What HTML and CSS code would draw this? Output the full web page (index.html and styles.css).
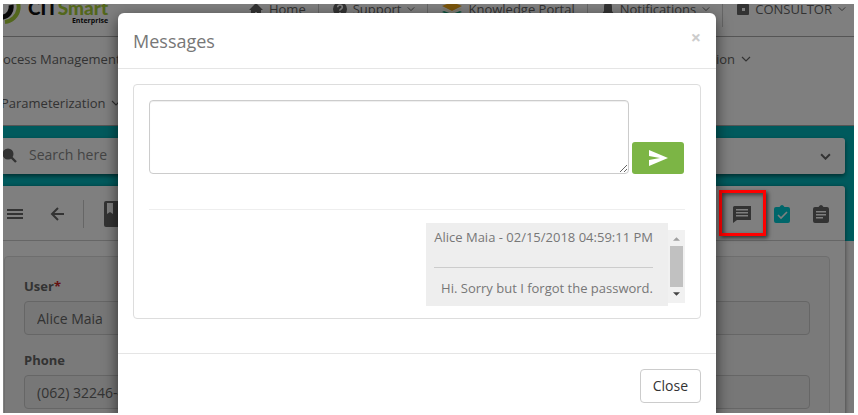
FILE: index.html
```html
<!DOCTYPE html>
<html lang="en">
<head>
<meta charset="utf-8">
<title>CITSmart Enterprise - Messages</title>
<link rel="stylesheet" href="styles.css">
</head>
<body>
<div class="app">
  <div class="page">
    <header class="topbar">
      <a class="brand" href="#">
        <svg class="brand-mark" viewBox="0 0 36 36" width="36" height="36"><path d="M25 4.500a15 15 0 0 1-5 28.500" fill="none" stroke="#a6ce39" stroke-width="4"/><path d="M26 16a9 10 0 1 1-8-8" fill="none" stroke="#111" stroke-width="5"/></svg>
        <span class="brand-text"><span class="brand-name">CIT<span class="green">Smart</span></span><span class="brand-sub">Enterprise</span></span>
      </a>
      <nav class="links">
        <a href="#"><svg viewBox="0 0 14 14" width="14" height="14"><path d="M7 1 0 8h2v6h4v-4h2v4h4V8h2z"/></svg>Home</a>
        <a href="#"><svg viewBox="0 0 14 14" width="14" height="14"><circle cx="7" cy="7" r="7"/><path d="M4.700 5.200Q4.800 3 7 3T9.300 5Q9.300 6.200 8 7T7 8.700M7 10v1.600" fill="none" stroke="#fff" stroke-width="1.600"/></svg>Support<svg class="chev" viewBox="0 0 10 6" width="8" height="6"><path d="m1 1 4 4 4-4"/></svg></a>
        <a href="#"><svg viewBox="0 0 20 18" width="20" height="18"><path fill="#f5ab18" d="m10 2 10 4-10 5L0 6z"/><path fill="#fff4d2" d="m0 9 2-1 8 4 8-4 2 1-10 4z"/><path fill="#17a77b" d="m0 12 2-1 8 3 8-3 2 1-10 4z"/></svg>Knowledge Portal</a>
        <a href="#"><svg viewBox="0 0 12 16" width="12" height="16"><path d="M6 0Q10 1 10 6v4l2 3H0l2-3V6Q2 1 6 0zM4 14h4q-2 3-4 0z"/></svg>Notifications<svg class="chev" viewBox="0 0 10 6" width="8" height="6"><path d="m1 1 4 4 4-4"/></svg></a>
        <a href="#"><svg viewBox="0 0 12 12" width="12" height="12"><path d="M1 1h2V0h2v1h2V0h2v1h2q1 0 1 1v9q0 1-1 1H1q-1 0-1-1V2q0-1 1-1z"/><path fill="#fff" d="M5 5h3v3H5z"/></svg>CONSULTOR<svg class="chev" viewBox="0 0 10 6" width="8" height="6"><path d="m1 1 4 4 4-4"/></svg></a>
      </nav>
    </header>
    <nav class="menu">
      <div class="menu-row"><a href="#">ocess Management</a><a href="#">Administration<svg class="chev" viewBox="0 0 10 6" width="10" height="6"><path d="m1 1 4 4 4-4"/></svg></a></div>
      <div class="menu-row second"><a href="#">Parameterization<svg class="chev" viewBox="0 0 10 6" width="10" height="6"><path d="m1 1 4 4 4-4"/></svg></a></div>
    </nav>
    <main class="main">
      <div class="search">
        <svg viewBox="0 0 14 16" width="14" height="16"><circle cx="5" cy="6" r="5.500"/><path d="m8 9 5 5" stroke="#666" stroke-width="2.400"/></svg>
        <input type="text" placeholder="Search here" aria-label="Search here">
        <svg class="expand" viewBox="0 0 10 6" width="11" height="7"><path d="m1 1 4 4 4-4"/></svg>
      </div>
      <section class="card">
        <div class="toolbar">
          <button type="button" aria-label="Menu"><svg viewBox="0 0 16 14" width="16" height="14"><path d="M0 2h16v2H0zm0 4h16v2H0zm0 4h16v2H0z"/></svg></button>
          <button type="button" class="back" aria-label="Back"><svg viewBox="0 0 14 14" width="14" height="14"><path d="M14 7H2m6-6L2 7l6 6" fill="none" stroke="#666" stroke-width="2"/></svg></button>
          <span class="rule"></span>
          <button type="button" aria-label="Book"><svg viewBox="0 0 20 26" width="20" height="26"><rect width="20" height="26" rx="2"/><path fill="#fff" d="M3 2h6v11l-3-2-3 2z"/></svg></button>
          <span class="actions">
            <button type="button" aria-label="Messages"><svg viewBox="0 0 18 17" width="18" height="17"><path fill-rule="evenodd" d="M1.500 0H18v14H4l-4 3V1.500Q0 0 1.500 0zM3 3v1.500h12V3zm0 3v1.500h12V6zm0 3v1.500h12V9z"/></svg></button>
            <button type="button" aria-label="Tasks"><svg class="teal" viewBox="0 0 16 18" width="16" height="18"><path d="M2 2h3.500q2.500-4 5 0H14q2 0 2 2v12q0 2-2 2H2q-2 0-2-2V4q0-2 2-2z"/><path d="m4 10 3 3 6-6" fill="none" stroke="#fff" stroke-width="1.600"/></svg></button>
            <button type="button" aria-label="Notes"><svg viewBox="0 0 16 18" width="16" height="18"><path d="M2 2h3.500q2.500-4 5 0H14q2 0 2 2v12q0 2-2 2H2q-2 0-2-2V4q0-2 2-2z"/><path fill="#fff" d="M3 6h10v1.500H3zm0 3h10v1.500H3zm0 3h7v1.500H3z"/></svg></button>
          </span>
        </div>
        <form class="details">
          <label for="user">User<span class="required">*</span></label>
          <input id="user" type="text" value="Alice Maia">
          <label for="phone">Phone</label>
          <input id="phone" type="text" value="(062) 32246-4444">
        </form>
      </section>
    </main>
  </div>
  <div class="backdrop"></div>
  <div class="marker"></div>
  <div class="modal" role="dialog" aria-labelledby="title">
    <div class="modal-head">
      <h1 id="title">Messages</h1>
      <button type="button" class="dismiss" aria-label="Dismiss">×</button>
    </div>
    <div class="modal-body">
      <div class="panel">
        <div class="compose">
          <textarea aria-label="Message"></textarea>
          <button type="button" class="send" aria-label="Send"><svg viewBox="0 0 19 16" width="19" height="16"><path fill="#fff" d="M0 0l19 8-19 8V10l11-2L0 6z"/></svg></button>
        </div>
        <div class="history">
          <article class="bubble">
            <div class="meta">Alice Maia - 02/15/2018 04:59:11 PM</div>
            <p>Hi. Sorry but I forgot the password.</p>
          </article>
          <div class="scroll">
            <svg viewBox="0 0 8 4" width="7" height="4"><path fill="#a0a0a0" d="M0 4h8L4 0z"/></svg>
            <span class="thumb"></span>
            <svg viewBox="0 0 8 4" width="7" height="4"><path fill="#444" d="M0 0h8L4 4z"/></svg>
          </div>
        </div>
      </div>
    </div>
    <div class="modal-foot"><button type="button" class="close">Close</button></div>
  </div>
</div>
</body>
</html>
```

FILE: styles.css
```css
* { box-sizing: border-box; }
body { margin: 0; background: #fff; font: 13px/20px "Open Sans", sans-serif; color: #666; }
a { color: inherit; text-decoration: none; }
button, input, textarea { font: inherit; color: inherit; }
button { border: 0; padding: 0; background: none; }
svg { display: block; flex: none; fill: #666; }
.chev path, .expand path { fill: none; stroke: #666; stroke-width: 1.2; }
.expand path { stroke-width: 1.8; }

.app { position: relative; height: calc(100vh - 6px); margin: 4px 4px 2px 3px; overflow: hidden; background: #fff; }
.page { margin-top: -22px; }

.topbar { display: flex; justify-content: space-between; height: 55px; border-bottom: 1px solid #aaa; }
.brand { display: flex; margin-left: -18px; }
.brand-mark { margin-top: 7px; }
.brand-text { display: flex; flex-direction: column; padding: 17px 0 0 7px; color: #111; }
.brand-name { font: 900 19px/18px Lato, sans-serif; }
.brand-name .green { color: #a6ce39; }
.brand-sub { align-self: flex-end; font: 700 7px/7px "Open Sans", sans-serif; }
.links { display: flex; align-items: center; }
.links a { display: flex; align-items: center; gap: 6px; height: 36px; padding: 0 12px 0 14px; border-left: 1px solid #ccc; }
.links a:first-child { border-left: 0; }
.links a:last-child { padding-right: 8px; }

.menu { border-bottom: 1px solid #aaa; }
.menu-row { display: flex; align-items: center; justify-content: space-between; height: 44px; padding-right: 103px; }
.menu-row a { display: flex; align-items: center; gap: 6px; }
.second { margin-left: -2px; }

.main { padding: 12px 9px 0 0; background: linear-gradient(#00b4ba, #00b4ba) 0 0 / 100% 115px no-repeat #f4f4f4; }
.search { display: flex; align-items: center; gap: 12px; height: 36px; padding-right: 14px; background: #fff; border-radius: 0 3px 3px 0; box-shadow: 0 2px 4px rgba(0, 0, 0, .5); }
.search input { flex: 1; min-width: 0; border: 0; padding: 0 0 2px; background: none; outline: 0; font-size: 14px; line-height: 20px; }
.search input::placeholder { color: #888; }
.card { margin-top: 12px; background: #fff; border-radius: 0 3px 0 0; box-shadow: 0 1px 4px rgba(0, 0, 0, .5); }
.toolbar { display: flex; align-items: center; height: 55px; padding: 2px 16px 0 4px; border-bottom: 1px solid #ccc; }
.back { margin-left: 27px; }
.rule { width: 1px; height: 28px; margin: 0 20px 0 19px; background: #ccc; }
.actions { display: flex; align-items: center; gap: 23px; margin-left: auto; }
svg.teal { fill: #00cdd4; }
.details { display: flex; flex-direction: column; margin: 15px 15px 0 1px; padding: 19px 19px 40px; border: 1px solid #ddd; border-radius: 4px; background: #f5f5f5; }
.details label { font-weight: 700; line-height: 20px; margin-bottom: 5px; }
.details input { height: 34px; margin-bottom: 15px; padding: 0 12px; border: 1px solid #ccc; border-radius: 4px; background: #eee; font-size: 14px; }
.required { color: #c22; }

.backdrop { position: absolute; inset: 0; background: rgba(0, 0, 0, .5); }
.marker { position: absolute; top: 186px; right: 88px; width: 47px; height: 46px; border: 3px solid #f00; box-shadow: 2px 2px 4px rgba(0, 0, 0, .6), inset 2px 2px 4px rgba(0, 0, 0, .5); }

.modal { position: absolute; top: 9px; left: 115px; right: 138px; min-height: 100%; background: #fff; border-radius: 6px; box-shadow: 0 5px 15px rgba(0, 0, 0, .6); }
.modal-head { display: flex; justify-content: space-between; align-items: flex-start; height: 56px; padding: 15px; border-bottom: 1px solid #e5e5e5; }
h1 { margin: 0; font-size: 18px; line-height: 26px; font-weight: 400; color: #777; }
.dismiss { font-size: 18px; line-height: 18px; font-weight: 700; color: #ccc; }
.modal-body { padding: 15px 15px 34px; }
.panel { padding: 15px; border: 1px solid #ddd; border-radius: 4px; }
.compose { display: flex; align-items: flex-end; gap: 3px; padding-bottom: 35px; border-bottom: 1px solid #eee; }
textarea { display: block; flex: 1; height: 74px; border: 1px solid #ccc; border-radius: 4px; resize: both; box-shadow: inset 0 1px 1px rgba(0, 0, 0, .07); }
.send { display: flex; align-items: center; justify-content: center; width: 52px; height: 32px; margin-right: 1px; border-radius: 3px; background: #7cb545; }
.history { display: flex; justify-content: flex-end; align-items: flex-start; margin: 13px 0 -3px; color: #777; }
.bubble { height: 83px; padding: 4px 15px 0 8px; background: #eee; text-align: right; }
.meta { padding-bottom: 20px; border-bottom: 1px solid #ccc; }
.bubble p { margin: 10px 0 0; }
.scroll { display: flex; flex-direction: column; align-items: center; justify-content: space-between; width: 17px; height: 73px; margin-top: 7px; padding: 7px 0; background: #f1f1f1; }
.thumb { width: 13px; height: 41px; background: #c1c1c1; }
.modal-foot { display: flex; justify-content: flex-end; padding: 15px; border-top: 1px solid #e5e5e5; }
.close { height: 34px; padding: 0 12px; border: 1px solid #ccc; border-radius: 4px; font-size: 14px; color: #333; background: #fff; }
```
